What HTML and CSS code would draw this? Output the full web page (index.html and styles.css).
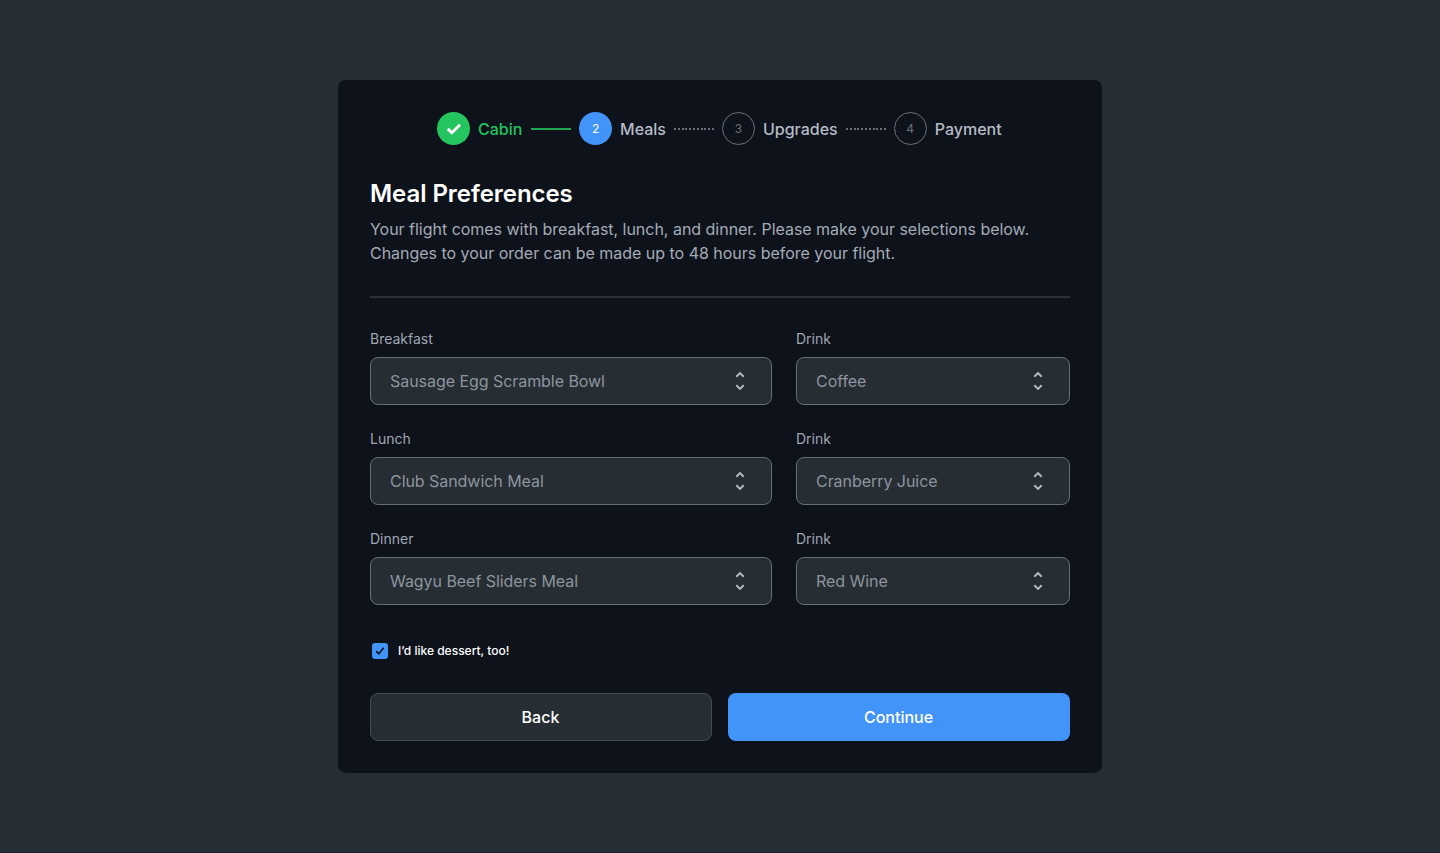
FILE: index.html
```html
<!DOCTYPE html>
<html lang="en">
<head>
<meta charset="utf-8">
<title>Meal Preferences</title>
<link rel="stylesheet" href="styles.css">
</head>
<body>
<svg class="defs" width="0" height="0" aria-hidden="true">
  <symbol id="chevrons" viewBox="0 0 24 24"><path d="M8.3 7.8 12 4.1l3.7 3.7M8.3 16.2 12 19.9l3.7-3.7"/></symbol>
</svg>
<main class="card">
  <ol class="steps">
    <li class="step done"><span class="badge"><svg class="tick" viewBox="0 0 16 16"><path d="M1.8 7.9 5.9 11.8 14 3.7"/></svg></span><span class="name">Cabin</span></li>
    <li class="line solid"></li>
    <li class="step active"><span class="badge">2</span><span class="name">Meals</span></li>
    <li class="line"></li>
    <li class="step"><span class="badge">3</span><span class="name">Upgrades</span></li>
    <li class="line"></li>
    <li class="step"><span class="badge">4</span><span class="name">Payment</span></li>
  </ol>
  <h1 class="title">Meal Preferences</h1>
  <p class="intro">Your flight comes with breakfast, lunch, and dinner. Please make your selections below.<br>Changes to your order can be made up to 48 hours before your flight.</p>
  <hr class="rule">
  <div class="fields">
    <div class="field"><span class="label">Breakfast</span><div class="select"><span>Sausage Egg Scramble Bowl</span><svg class="chevrons"><use href="#chevrons"/></svg></div></div>
    <div class="field"><span class="label">Drink</span><div class="select"><span>Coffee</span><svg class="chevrons"><use href="#chevrons"/></svg></div></div>
    <div class="field"><span class="label">Lunch</span><div class="select"><span>Club Sandwich Meal</span><svg class="chevrons"><use href="#chevrons"/></svg></div></div>
    <div class="field"><span class="label">Drink</span><div class="select"><span>Cranberry Juice</span><svg class="chevrons"><use href="#chevrons"/></svg></div></div>
    <div class="field"><span class="label">Dinner</span><div class="select"><span>Wagyu Beef Sliders Meal</span><svg class="chevrons"><use href="#chevrons"/></svg></div></div>
    <div class="field"><span class="label">Drink</span><div class="select"><span>Red Wine</span><svg class="chevrons"><use href="#chevrons"/></svg></div></div>
  </div>
  <div class="dessert"><span class="checkbox"><svg viewBox="0 0 15 15"><path d="M4 7.7 6.4 10.1 11 4.5"/></svg></span><span class="dessert-text">I’d like dessert, too!</span></div>
  <div class="actions"><button class="button back">Back</button><button class="button continue">Continue</button></div>
</main>
</body>
</html>
```

FILE: styles.css
```css
* { box-sizing: border-box; }
body {
  margin: 0;
  height: 853px;
  padding-top: 80px;
  background: #262d34;
  border-bottom: 1px solid #1b2531;
  font-family: Inter, sans-serif;
  color: #fff;
  overflow: hidden;
}
.defs { position: absolute; }
.card {
  width: 764px;
  height: 693px;
  margin: 0 auto;
  padding: 32px;
  border-radius: 8px;
  background: #0d121b;
}
.steps {
  display: flex;
  align-items: center;
  gap: 8px;
  margin: 0;
  padding: 0 0 0 67px;
  list-style: none;
}
.step { display: flex; align-items: center; gap: 8px; color: #b6bbc5; }
.badge {
  display: flex;
  align-items: center;
  justify-content: center;
  width: 33px;
  height: 33px;
  border: 1px solid #6b717d;
  border-radius: 50%;
  font-size: 12px;
  color: #6b717d;
}
.name { font-size: 16px; font-weight: 500; line-height: 24px; }
.done { margin-right: 0.7px; color: #24c45f; }
.done .badge { background: #24c45f; border: 0; }
.active .badge { background: #4294f8; border: 0; color: #fff; }
.tick { width: 16px; height: 16px; fill: none; stroke: #fff; stroke-width: 2.9; }
.line {
  width: 40px;
  height: 2px;
  background: repeating-linear-gradient(90deg, #6a707b 0 2px, transparent 2px 3.8px);
}
.line.solid { background: #20a752; }
.title { margin: 33px 0 0; font-size: 24px; font-weight: 600; line-height: 32px; letter-spacing: -0.05px; }
.intro { margin: 7px 0 0; font-size: 16px; line-height: 24px; letter-spacing: -0.022px; color: #a5abb6; white-space: nowrap; }
.rule { height: 2px; margin: 31px 0; border: 0; background: #2b3037; }
.fields { display: grid; grid-template-columns: 402px 274px; gap: 24px; }
.label { display: block; height: 20px; margin-bottom: 8px; font-size: 14px; line-height: 20px; color: #a0a6b1; }
.select {
  display: flex;
  align-items: center;
  justify-content: space-between;
  height: 48px;
  padding: 0 19px;
  border: 1px solid #666e77;
  border-radius: 8px;
  background: #262d33;
  font-size: 16px;
  letter-spacing: -0.05px;
  color: #8d949f;
}
.chevrons { width: 24px; height: 24px; fill: none; stroke: #b4bac4; stroke-width: 2; }
.dessert { display: flex; align-items: center; gap: 10px; height: 20px; margin-top: 36px; padding-left: 2px; font-size: 12px; font-weight: 500; }
.dessert-text { padding-bottom: 2px; }
.checkbox { width: 16px; height: 16px; border-radius: 3px; background: #4294f8; }
.checkbox svg { display: block; width: 16px; height: 16px; fill: none; stroke: #101722; stroke-width: 1.6; }
.actions { display: grid; grid-template-columns: 1fr 1fr; gap: 16px; margin-top: 32px; }
.button { height: 48px; border: 0; border-radius: 8px; font: 500 16px Inter, sans-serif; color: #fff; }
.back { padding-right: 7px; background: #262d33; border: 1px solid #444b55; }
.continue { padding-right: 7px; background: #4294f8; }
```
